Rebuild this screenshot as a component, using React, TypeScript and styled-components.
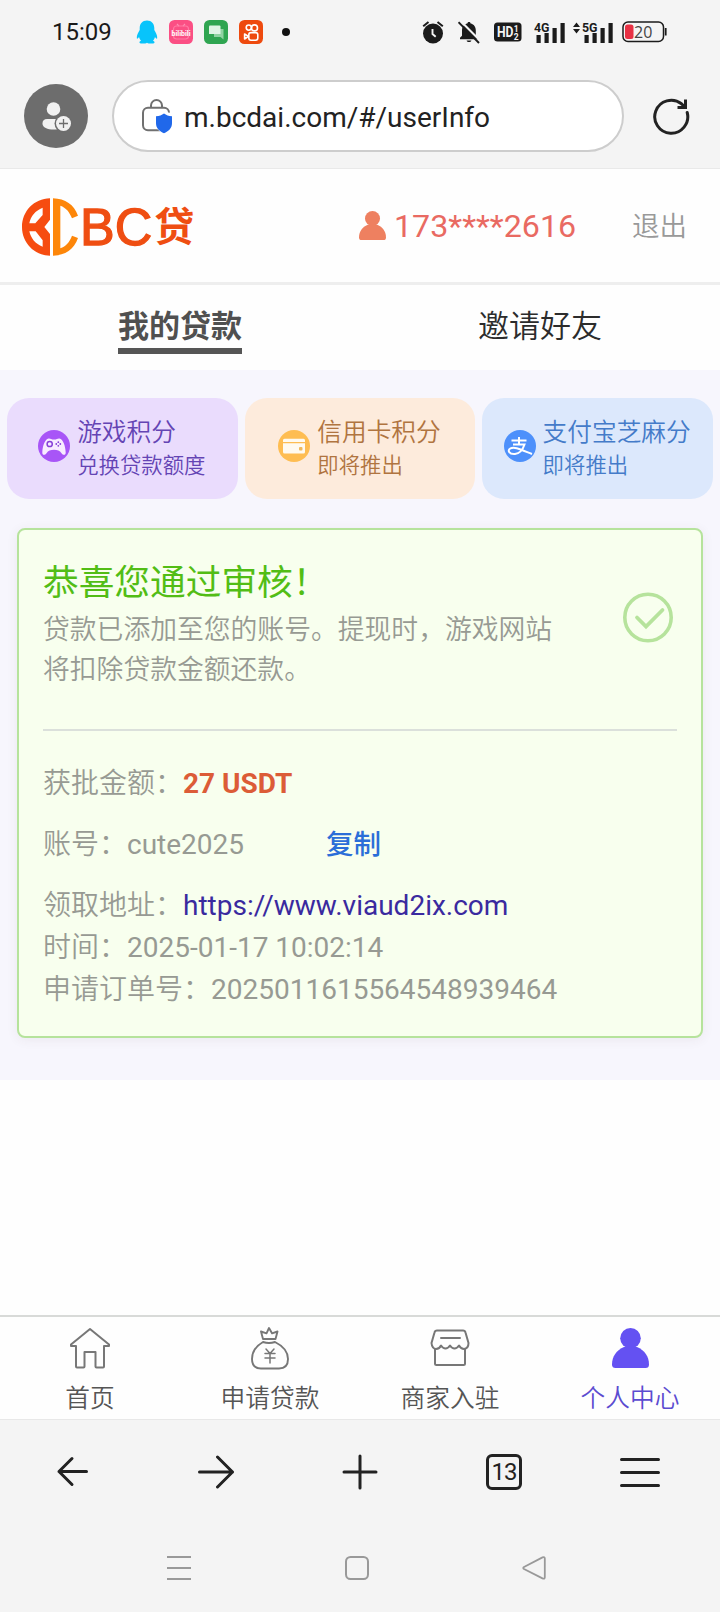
import React from "react";
import styled, { createGlobalStyle } from "styled-components";

const GlobalStyle = createGlobalStyle`
  * { box-sizing: border-box; }
  body {
    margin: 0;
    background: #fff;
    font-family: Roboto, "Noto Sans CJK SC", sans-serif;
    color: #222;
  }
  svg { display: block; flex: none; }
`;

const Screen = styled.div`
  width: 720px;
  height: 1612px;
  display: flex;
  flex-direction: column;
  overflow: hidden;
  background: #fefefe;
`;

const BrowserTop = styled.header`
  height: 169px;
  flex: none;
  background: #f4f4f4;
  border-bottom: 1px solid #e9e9e9;
`;

const StatusBar = styled.div`
  height: 64px;
  display: flex;
  align-items: center;
  padding: 0 53px 0 52px;
`;

const Clock = styled.span`
  width: 84px;
  font-size: 24px;
  color: #1a1a1a;
`;

const AppIcons = styled.div`
  display: flex;
  align-items: center;
  gap: 11px;
`;

const SystemIcons = styled.div`
  margin-left: auto;
  display: flex;
  align-items: center;
`;

const Spacer = styled.i<{ $w: number }>`
  width: ${(p) => p.$w}px;
  flex: none;
`;

const AddressRow = styled.div`
  display: flex;
  align-items: center;
  height: 72px;
  margin-top: 16px;
  padding: 0 30px 0 24px;
`;

const Avatar = styled.div`
  width: 64px;
  height: 64px;
  flex: none;
  border-radius: 50%;
  background: #6d6d6d;
`;

const AddressPill = styled.div`
  width: 512px;
  height: 72px;
  margin: 0 28px 0 24px;
  flex: none;
  display: flex;
  align-items: center;
  padding-left: 26px;
  border: 2px solid #cdcdcd;
  border-radius: 36px;
  background: #fff;
`;

const Url = styled.span`
  margin: 3px 0 0 11px;
  font-size: 28px;
  line-height: 36px;
  color: #222;
`;

const SiteHeader = styled.div`
  height: 116px;
  flex: none;
  display: flex;
  align-items: center;
  padding: 0 33px 0 22px;
  background: #fefefe;
  border-bottom: 3px solid #eeeeee;
`;

const Logo = styled.div`
  display: flex;
  align-items: center;
  margin-top: 3px;
`;

const LogoText = styled.div`
  display: flex;
  align-items: center;
  margin-left: 2px;
  font-family: "Liberation Sans", sans-serif;
  font-size: 52px;
  line-height: 60px;
  color: #ef4e12;
  -webkit-text-stroke: 1.3px #ef4e12;
`;

const LogoHan = styled.span`
  font-family: "Noto Sans CJK SC", sans-serif;
  font-weight: 700;
  font-size: 40px;
  line-height: 60px;
  margin: 0 0 7px 2px;
  -webkit-text-stroke: 0;
`;

const Account = styled.div`
  margin-left: auto;
  display: flex;
  align-items: center;
  font-size: 32.2px;
  line-height: 40px;
  color: #e96a62;
`;

const Phone = styled.span`
  margin-left: 8px;
  width: 238px;
`;

const Logout = styled.span`
  margin-top: -3px;
  font-size: 27.5px;
  line-height: 40px;
  color: #999;
  font-weight: 350;
  font-family: "Noto Sans CJK SC", sans-serif;
`;

const Tabs = styled.nav`
  height: 85px;
  flex: none;
  display: flex;
  justify-content: space-around;
  background: #fefefe;
`;

const TabCell = styled.div`
  flex: 1;
  display: flex;
  justify-content: center;
  align-items: flex-start;
  padding-top: 16px;
`;

const Tab = styled.span<{ $active?: boolean }>`
  height: 53px;
  font-size: 31px;
  line-height: 46px;
  font-weight: ${(p) => (p.$active ? 700 : 350)};
  color: ${(p) => (p.$active ? "#505050" : "#2c2c2c")};
  font-family: "Noto Sans CJK SC", sans-serif;
  border-bottom: ${(p) => (p.$active ? "6px solid #555" : "0")};
`;

const Content = styled.main`
  height: 710px;
  flex: none;
  background: #f7f6fd;
  padding: 28px 7px 0;
`;

const Chips = styled.div`
  display: grid;
  grid-template-columns: repeat(3, 1fr);
  gap: 7px;
`;

const Chip = styled.div<{ $bg: string; $fg: string }>`
  height: 101px;
  display: flex;
  align-items: center;
  justify-content: center;
  gap: 7px;
  padding: 0 1px 5px 0;
  border-radius: 22px;
  background: ${(p) => p.$bg};
  color: ${(p) => p.$fg};
  font-family: "Noto Sans CJK SC", sans-serif;
  font-weight: 350;
`;

const ChipTitle = styled.div`
  font-size: 24.7px;
  line-height: 36px;
  margin-top: -1px;
  white-space: nowrap;
`;

const ChipSub = styled.div`
  font-size: 21.4px;
  line-height: 32px;
`;

const Card = styled.section`
  width: 686px;
  height: 510px;
  margin: 29px 0 0 10px;
  padding: 31px 24px 0;
  border: 2px solid #b6e39c;
  border-radius: 8px;
  background: #f8ffee;
  box-shadow: 0 2px 12px rgba(80, 60, 60, 0.07);
  color: #979a93;
`;

const Notice = styled.div`
  display: flex;
  justify-content: space-between;
  height: 170px;
  border-bottom: 2px solid #dbe0db;
  padding-right: 4px;
  font-family: "Noto Sans CJK SC", sans-serif;
`;

const NoticeTitle = styled.h1`
  margin: 0;
  font-size: 35.7px;
  line-height: 37px;
  font-weight: 400;
  color: #52bd15;
`;

const NoticeText = styled.p`
  margin: 10px 0 0;
  width: 520px;
  font-size: 26.8px;
  line-height: 40px;
  font-weight: 350;
`;

const CheckSlot = styled.div`
  padding-top: 31px;
`;

const Fields = styled.div`
  padding-top: 30px;
`;

const Field = styled.div<{ $gap?: boolean }>`
  display: flex;
  align-items: baseline;
  height: 42px;
  margin-bottom: ${(p) => (p.$gap ? 19 : 0)}px;
  font-size: 28px;
  line-height: 40px;
`;

const Label = styled.span`
  font-family: "Noto Sans CJK SC", sans-serif;
  font-weight: 350;
`;

const Amount = styled.b`
  font-weight: 700;
  color: #dc5c37;
`;

const CopyLink = styled.span`
  margin-left: 82px;
  font-size: 27.5px;
  font-weight: 500;
  font-family: "Noto Sans CJK SC", sans-serif;
  color: #2b6ed8;
`;

const SiteLink = styled.span`
  color: #3a2a9f;
`;

const SiteNav = styled.nav`
  height: 105px;
  flex: none;
  margin-top: auto;
  display: grid;
  grid-template-columns: repeat(4, 1fr);
  background: #fefefe;
  border-top: 2px solid #d8dad8;
  border-bottom: 1px solid #e8e8e8;
`;

const NavItem = styled.div<{ $active?: boolean }>`
  display: flex;
  flex-direction: column;
  align-items: center;
  padding-top: 9px;
  font-family: "Noto Sans CJK SC", sans-serif;
  font-size: 24.7px;
  line-height: 36px;
  font-weight: 350;
  color: ${(p) => (p.$active ? "#5b4bd0" : "#555")};
`;

const NavLabel = styled.span`
  margin-top: 8px;
`;

const PersonSlot = styled.div`
  height: 44px;
  padding-top: 2px;
`;

const BrowserBar = styled.div`
  height: 103px;
  flex: none;
  display: grid;
  grid-template-columns: repeat(5, 1fr);
  align-items: center;
  justify-items: center;
  background: #f4f4f4;
`;

const MenuSlot = styled.div`
  margin-right: 16px;
`;

const TabCount = styled.div`
  width: 36px;
  height: 36px;
  border: 3px solid #222;
  border-radius: 6px;
  font-size: 24px;
  line-height: 31px;
  text-align: center;
  letter-spacing: -1px;
  color: #222;
`;

const SystemNav = styled.div`
  height: 89px;
  flex: none;
  display: flex;
  justify-content: space-between;
  padding: 31px 174px 0 167px;
  background: #f4f4f4;
`;

const Penguin = () => (
  <svg width="22" height="24" viewBox="0 0 22 24">
    <path
      fill="#08c4fb"
      d="M11 .5c-4.600 0-7.300 3.400-7.300 7.500v2C2.200 12.500.600 15.400.800 18c.100 1.300 1 .800 2.200-.900.300 1.500 1 2.700 2 3.600-1.500.500-1.900 1.400-1.300 2.200.800.900 5.600.900 7.300-.200 1.700 1.100 6.500 1.100 7.300.2.600-.800.200-1.700-1.300-2.200 1-.900 1.700-2.100 2-3.600 1.200 1.700 2.100 2.200 2.200.9.200-2.600-1.400-5.500-2.900-8V8c0-4.100-2.700-7.500-7.300-7.500z"
    />
  </svg>
);

const BiliIcon = () => (
  <svg width="24" height="24" viewBox="0 0 24 24">
    <rect width="24" height="24" rx="5.500" fill="#fb4f84" />
    <path d="M8 4l2 2.200M16 4l-2 2.200" stroke="#ff8fb4" strokeWidth="1.200" />
    <rect x="4.500" y="6" width="15" height="13" rx="3" fill="none" stroke="#ff7aa4" strokeWidth="1.200" />
    <text x="12" y="15.500" textAnchor="middle" fontSize="7" fontWeight="700" fill="#fff">
      bilibili
    </text>
  </svg>
);

const MessagesIcon = () => (
  <svg width="24" height="24" viewBox="0 0 24 24">
    <rect width="24" height="24" rx="5.500" fill="#2fa551" />
    <path d="M10 9h9.500v10.500L16.500 17H10z" fill="#8fd3a2" />
    <path d="M6 5.500h9.500q1 0 1 1V14H5V6.500q0-1 1-1z" fill="#dff4e5" />
  </svg>
);

const KuaiIcon = () => (
  <svg width="24" height="24" viewBox="0 0 24 24">
    <rect width="24" height="24" rx="5.500" fill="#ee4a0e" />
    <g fill="none" stroke="#fff" strokeWidth="1.600">
      <circle cx="9.800" cy="7.600" r="2.600" />
      <circle cx="15.500" cy="7.900" r="3" />
      <rect x="9.800" y="12.600" width="9" height="7.600" rx="2.200" />
      <path d="M9.500 16.400L5.600 14v5z" strokeLinejoin="round" />
    </g>
  </svg>
);

const AlarmIcon = () => (
  <svg width="22" height="23" viewBox="0 0 22 23">
    <circle cx="11" cy="12.500" r="10" fill="#1b1b1b" />
    <path d="M1.200 5.200L6.500 1M20.800 5.200L15.500 1" stroke="#1b1b1b" strokeWidth="2" />
    <path d="M10.500 8v5l3.200 2.700" fill="none" stroke="#f4f4f4" strokeWidth="1.900" />
  </svg>
);

const MutedBell = () => (
  <svg width="22" height="23" viewBox="0 0 22 23">
    <path
      d="M11 1c1 0 1.600.7 1.600 1.600 3.400.7 5.200 3.500 5.200 7v5.200l2 2V18.300H2v-1.500l2-2V9.600c0-3.500 1.900-6.300 5.400-7C9.400 1.700 10 1 11 1zM8.600 19.400h4.800c-.5 2.200-4.300 2.200-4.800 0z"
      fill="#1b1b1b"
    />
    <path d="M2.500 0L22 19.500" stroke="#f4f4f4" strokeWidth="2.200" />
    <path d="M.5 1.200L21 22" stroke="#1b1b1b" strokeWidth="1.900" />
  </svg>
);

const HdIcon = () => (
  <svg width="28" height="20" viewBox="0 0 28 20">
    <rect width="27.500" height="19" y=".5" rx="3.500" fill="#1b1b1b" />
    <g fill="#f4f4f4" fontWeight="700">
      <text x="3" y="15" fontSize="14" textLength="16.500" lengthAdjust="spacingAndGlyphs">
        HD
      </text>
      <text x="19.700" y="9.500" fontSize="8.500">
        1
      </text>
      <text x="19.700" y="17.500" fontSize="8.500">
        2
      </text>
    </g>
  </svg>
);

const Signal = ({ label, arrows }: { label: string; arrows?: boolean }) => {
  const s = arrows ? 9 : 0;
  return (
    <svg width={32 + s} height="23" viewBox={`0 0 ${32 + s} 23`}>
      {arrows && <path d="M0 6L3.500 1.500 7 6zM0 8h7l-3.500 4.500z" fill="#1b1b1b" />}
      <text x={s} y="11" fontSize="13" fontWeight="700" fill="#1b1b1b" textLength="15.500" lengthAdjust="spacingAndGlyphs">
        {label}
      </text>
      <path
        transform={`translate(${s} 0)`}
        d="M2.500 14h4.200v8H2.500zM10.500 12h4.200v10h-4.200zM18.500 7h4.200v15h-4.200zM26.500 2h4.200v20h-4.200z"
        fill="#1b1b1b"
      />
    </svg>
  );
};

const Battery = () => (
  <svg width="45" height="22" viewBox="0 0 45 22">
    <rect x="1" y="1" width="40.500" height="19.500" rx="5" fill="none" stroke="#1b1b1b" strokeWidth="1.500" />
    <rect x="3" y="3.500" width="8.500" height="14.500" rx="2.500" fill="#e83144" />
    <path d="M43.700 7v7.500" stroke="#1b1b1b" strokeWidth="1.800" />
    <text x="12" y="16.500" fontSize="16" fill="#444" fontFamily="Open Sans">
      20
    </text>
  </svg>
);

const AvatarIcon = () => (
  <svg width="64" height="64" viewBox="0 0 64 64">
    <circle cx="29.500" cy="25" r="6.800" fill="#f1f1f1" />
    <path d="M18.500 39.500q0-4.500 4.500-4.500h13q4.500 0 4.500 4.500c0 4-5 6-11 6s-11-2-11-6z" fill="#f1f1f1" />
    <circle cx="39.500" cy="39.500" r="9" fill="#6d6d6d" />
    <circle cx="39.500" cy="39.500" r="7.500" fill="#f1f1f1" />
    <path d="M39.500 35v9M35 39.500h9" stroke="#6d6d6d" strokeWidth="1.300" />
  </svg>
);

const SecureIcon = () => (
  <svg width="33" height="36" viewBox="0 0 33 36">
    <path d="M11 10V7.500a5.500 5.500 0 0 1 11 0V10" fill="none" stroke="#707070" strokeWidth="2" />
    <rect x="3" y="9.800" width="26" height="22.500" rx="5" fill="none" stroke="#707070" strokeWidth="2" />
    <path d="M23.500 14c-2.500 2-4.500 2.500-8 2.800V25c0 5.500 4 8.500 8 11h9.500V15z" fill="#fff" />
    <path d="M24 15.500c2.300 1.700 4.500 2.500 8 2.700v7c0 5-3.500 8-8 10-4.500-2-8-5-8-10v-7c3.500-.2 5.700-1 8-2.700z" fill="#2068ea" />
  </svg>
);

const Reload = () => (
  <svg width="38" height="38" viewBox="0 0 38 38">
    <path d="M35.200 15.500A16.500 16.500 0 1 1 29.500 6.800l3.500 3.200" fill="none" stroke="#222" strokeWidth="3" strokeLinecap="round" />
    <path d="M33.500 2.500V10.500h-8" fill="none" stroke="#222" strokeWidth="3" />
  </svg>
);

const Emblem = () => (
  <svg width="56" height="58" viewBox="66 101 168 172">
    <path
      fill="#f64c10"
      fillRule="evenodd"
      d="M150 101V165L133 187 150 208V273C102 272 66 234 66 187S102 102 150 101zM88 176H106L128 151V129C106 138 92 154 88 176zM88 200C93 222 106 238 128 246V227L107 200z"
    />
    <path
      fill="#fd8609"
      d="M159 101C196 102 222 120 234 153L216 161C208 141 198 129 181 123V251C198 245 208 233 216 213L234 220C222 254 196 272 159 273z"
    />
  </svg>
);

const PersonIcon = ({ w, h, color }: { w: number; h: number; color: string }) => (
  <svg width={w} height={h} viewBox="0 0 37 40" preserveAspectRatio="none">
    <circle cx="18.500" cy="10.300" r="10.300" fill={color} />
    <path d="M12 19h13c7.500 3 12 9.500 12 17.500q0 3.500-3.500 3.500h-30Q0 40 0 36.500C0 28.500 4.500 22 12 19z" fill={color} />
  </svg>
);

const GameIcon = () => (
  <svg width="32" height="32" viewBox="0 0 32 32">
    <circle cx="16" cy="16" r="16" fill="#a855f7" />
    <path
      d="M10.500 8.500c2-.3 2.500 1 5.500 1s3.500-1.300 5.500-1c3.500.5 6 7.500 6.200 14 .1 3-2.700 2.800-4.200.7-1.800-2.500-4-3.400-7.500-3.400s-5.700.9-7.500 3.400C7 25.300 4.200 25.500 4.300 22.500c.2-6.500 2.700-13.500 6.200-14z"
      fill="#f8ecff"
    />
    <circle cx="11.700" cy="14" r="2.600" fill="none" stroke="#8740d8" strokeWidth="1.500" />
    <g fill="#8740d8">
      <circle cx="20.300" cy="12.200" r=".900" />
      <circle cx="18.300" cy="14" r=".900" />
      <circle cx="22.300" cy="14" r=".900" />
      <circle cx="20.300" cy="15.800" r=".900" />
    </g>
  </svg>
);

const WalletIcon = () => (
  <svg width="32" height="32" viewBox="0 0 32 32">
    <circle cx="16" cy="16" r="16" fill="#febd52" />
    <path d="M6.500 8.800h19q1.500 0 1.500 1.500V12H5v-1.700q0-1.500 1.500-1.500zM5 13.300h22V22q0 1.500-1.500 1.500h-19Q5 23.500 5 22z" fill="#fffaf0" />
    <rect x="21" y="17" width="3.500" height="3.500" rx="1" fill="#efb95c" />
  </svg>
);

const AlipayIcon = () => (
  <svg width="32" height="32" viewBox="0 0 32 32">
    <circle cx="16" cy="16" r="16" fill="#4d90fb" />
    <g fill="none" stroke="#fff" strokeWidth="2">
      <path d="M7.500 10.500h15M15 7v7M9 14.500h11.500c-1.500 4.500-4.500 9-9.500 9.500-6 .5-8-4-4.500-5.700 4-1.900 9 .7 21.500 5.700" />
    </g>
  </svg>
);

const CheckIcon = () => (
  <svg width="50" height="51" viewBox="0 0 50 51">
    <circle cx="25" cy="25.500" r="23.200" fill="none" stroke="#b6e39c" strokeWidth="3.600" />
    <path d="M14 25.500l9 9 16.500-16.500" fill="none" stroke="#b6e39c" strokeWidth="3.800" strokeLinecap="round" />
  </svg>
);

const HomeIcon = () => (
  <svg width="44" height="44" viewBox="0 0 44 44" fill="none" stroke="#777" strokeWidth="2" strokeLinejoin="round">
    <path d="M22 3L3 18.500V20h5v20.500q0 1 1 1h6.500q1 0 1-1V26h11v14.500q0 1 1 1H35q1 0 1-1V20h5v-1.500z" />
  </svg>
);

const BagIcon = () => (
  <svg width="44" height="44" viewBox="0 0 44 44" fill="none" stroke="#777" strokeWidth="1.900" strokeLinejoin="round" strokeLinecap="round">
    <path d="M15 13l-2-7.500 5.500 1.800L21 2l3 5.300 5.500-1.800-2 7.500zM15 16q6 2 12 0 13 6.500 13 17 0 9.500-9 9.500H13q-9 0-9-9.500Q4 22.500 15 16z" />
    <path d="M18 23l4 4.500 4-4.500M17 27.500h10M17 32h10M22 27.500V37" strokeWidth="1.500" />
  </svg>
);

const ShopIcon = () => (
  <svg width="44" height="44" viewBox="0 0 44 44" fill="none" stroke="#777" strokeWidth="2" strokeLinejoin="round" strokeLinecap="round">
    <path d="M9 4.500h26q2 0 2.500 2L40.500 17q0 5.500-4.500 6-3 0-5-3.500-2 3-4.500 3-2.500 0-4.500-3-2 3-4.500 3-2.500 0-4.500-3Q11.500 23 8 23q-4-.5-4.500-6L6.500 6.500q.5-2 2.500-2zM7 23v14.500q0 1.500 1.500 1.500h27q1.500 0 1.500-1.500V23M13 12h19" />
  </svg>
);

const chips = [
  { title: "游戏积分", sub: "兑换贷款额度", bg: "#eadcfd", fg: "#6444b4", icon: <GameIcon /> },
  { title: "信用卡积分", sub: "即将推出", bg: "#fdebdc", fg: "#b07440", icon: <WalletIcon /> },
  { title: "支付宝芝麻分", sub: "即将推出", bg: "#dce8fc", fg: "#447bc9", icon: <AlipayIcon /> },
];

const navItems = [
  { label: "首页", icon: <HomeIcon /> },
  { label: "申请贷款", icon: <BagIcon /> },
  { label: "商家入驻", icon: <ShopIcon /> },
];

export default function App() {
  return (
    <Screen>
      <GlobalStyle />
      <BrowserTop>
        <StatusBar>
          <Clock>15:09</Clock>
          <AppIcons>
            <Penguin />
            <BiliIcon />
            <MessagesIcon />
            <KuaiIcon />
            <svg width="26" height="10" viewBox="0 0 26 10">
              <circle cx="12" cy="5" r="4" fill="#111" />
            </svg>
          </AppIcons>
          <SystemIcons>
            <AlarmIcon />
            <Spacer $w={14} />
            <MutedBell />
            <Spacer $w={14} />
            <HdIcon />
            <Spacer $w={12} />
            <Signal label="4G" />
            <Spacer $w={7} />
            <Signal label="5G" arrows />
            <Spacer $w={8} />
            <Battery />
          </SystemIcons>
        </StatusBar>
        <AddressRow>
          <Avatar>
            <AvatarIcon />
          </Avatar>
          <AddressPill>
            <SecureIcon />
            <Url>m.bcdai.com/#/userInfo</Url>
          </AddressPill>
          <Reload />
        </AddressRow>
      </BrowserTop>

      <SiteHeader>
        <Logo>
          <Emblem />
          <LogoText>
            BC<LogoHan>贷</LogoHan>
          </LogoText>
        </Logo>
        <Account>
          <PersonIcon w={27} h={29} color="#ee8060" />
          <Phone>173****2616</Phone>
        </Account>
        <Logout>退出</Logout>
      </SiteHeader>

      <Tabs>
        <TabCell>
          <Tab $active>我的贷款</Tab>
        </TabCell>
        <TabCell>
          <Tab>邀请好友</Tab>
        </TabCell>
      </Tabs>

      <Content>
        <Chips>
          {chips.map((c) => (
            <Chip key={c.title} $bg={c.bg} $fg={c.fg}>
              {c.icon}
              <div>
                <ChipTitle>{c.title}</ChipTitle>
                <ChipSub>{c.sub}</ChipSub>
              </div>
            </Chip>
          ))}
        </Chips>

        <Card>
          <Notice>
            <div>
              <NoticeTitle>恭喜您通过审核！</NoticeTitle>
              <NoticeText>贷款已添加至您的账号。提现时，游戏网站将扣除贷款金额还款。</NoticeText>
            </div>
            <CheckSlot>
              <CheckIcon />
            </CheckSlot>
          </Notice>
          <Fields>
            <Field $gap>
              <Label>获批金额：</Label>
              <Amount>27 USDT</Amount>
            </Field>
            <Field $gap>
              <Label>账号：</Label>
              <span>cute2025</span>
              <CopyLink>复制</CopyLink>
            </Field>
            <Field>
              <Label>领取地址：</Label>
              <SiteLink>https://www.viaud2ix.com</SiteLink>
            </Field>
            <Field>
              <Label>时间：</Label>
              <span>2025-01-17 10:02:14</span>
            </Field>
            <Field>
              <Label>申请订单号：</Label>
              <span>2025011615564548939464</span>
            </Field>
          </Fields>
        </Card>
      </Content>

      <SiteNav>
        {navItems.map((n) => (
          <NavItem key={n.label}>
            {n.icon}
            <NavLabel>{n.label}</NavLabel>
          </NavItem>
        ))}
        <NavItem $active>
          <PersonSlot>
            <PersonIcon w={37} h={40} color="#6451f2" />
          </PersonSlot>
          <NavLabel>个人中心</NavLabel>
        </NavItem>
      </SiteNav>

      <BrowserBar>
        <svg width="32" height="32" viewBox="0 0 32 32" fill="none" stroke="#222" strokeWidth="3" strokeLinecap="round" strokeLinejoin="round">
          <path d="M16 2.500L3 15.500l13 13M3 15.500h27.500" />
        </svg>
        <svg width="38" height="34" viewBox="0 0 38 34" fill="none" stroke="#222" strokeWidth="3" strokeLinecap="round" strokeLinejoin="round">
          <path d="M20.500 2l15 15-15 15M35.500 17h-33" />
        </svg>
        <svg width="36" height="36" viewBox="0 0 36 36" fill="none" stroke="#222" strokeWidth="3" strokeLinecap="round">
          <path d="M18 2v32M2 18h32" />
        </svg>
        <TabCount>13</TabCount>
        <MenuSlot>
          <svg width="40" height="30" viewBox="0 0 40 30" fill="none" stroke="#222" strokeWidth="3" strokeLinecap="round">
            <path d="M1.500 2.500h37M1.500 15.500h37M1.500 28.500h37" />
          </svg>
        </MenuSlot>
      </BrowserBar>

      <SystemNav>
        <svg width="24" height="26" viewBox="0 0 24 26" stroke="#999" strokeWidth="2">
          <path d="M0 3h24M0 14h24M0 25h24" />
        </svg>
        <svg width="24" height="26" viewBox="0 0 24 26" fill="none" stroke="#999" strokeWidth="2">
          <rect x="1" y="3" width="22" height="22" rx="4.500" />
        </svg>
        <svg width="24" height="26" viewBox="0 0 24 26" fill="none" stroke="#999" strokeWidth="1.800" strokeLinejoin="round">
          <path d="M2 13L20.500 3.400q2.300-1 2.300 1.200v18.600q0 2.200-2.300 1.200L2 15q-1.500-1 0-2z" />
        </svg>
      </SystemNav>
    </Screen>
  );
}
